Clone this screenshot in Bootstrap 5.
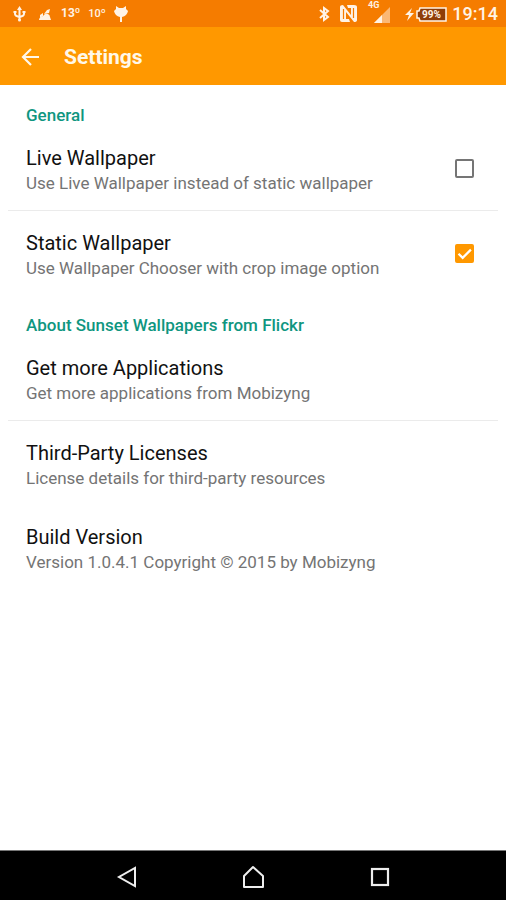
<!DOCTYPE html>
<html lang="en">
<head>
<meta charset="utf-8">
<meta name="viewport" content="width=device-width, initial-scale=1">
<title>Settings</title>
<link href="https://cdn.jsdelivr.net/npm/bootstrap@5.3.0/dist/css/bootstrap.min.css" rel="stylesheet">
<style>
body { font-family: Roboto, sans-serif; background: #fff; color: #111; }
svg { display: block; flex: none; }
.status { background: #f57c00; color: #fff3e6; height: 27px; padding: 0 8px 0 11px; line-height: 29px; }
.temp { font-size: 12px; font-weight: 700; }
.temp-low { font-size: 11px; font-weight: 500; }
.clock { font-size: 18px; font-weight: 500; }
.batt { font-size: 10px; font-weight: 700; fill: #fff3e6; }
.net { font-size: 9px; font-weight: 700; fill: #fff3e6; }
.appbar { background: #ff9800; height: 58px; padding: 0 18px; color: #fff8ea; }
.appbar h1 { font-size: 21px; font-weight: 700; line-height: 28px; margin: 2px 0 0 20px; }
.back { color: #fff8ea; }
.group { font-size: 17px; line-height: 22px; font-weight: 500; color: #0f9680; padding: 19px 18px 0; height: 41px; margin: 0; }
.pref { height: 84px; padding: 4px 18px 0; color: #111; text-align: left; }
.ruled { height: 85px; border-bottom: 1px solid #ebebeb; }
.pref-title { font-size: 20px; line-height: 26px; }
.pref-note { font-size: 17px; line-height: 24px; color: #747474; }
.tick.form-check-input { width: 19px; height: 19px; margin: 0 6px 4px 0; border: 2px solid #757575; border-radius: 2px; flex: none; }
.tick.form-check-input:checked { background-color: #ff9800; border-color: #ff9800; background-size: 18px 18px; background-image: url("data:image/svg+xml,%3Csvg xmlns='http://www.w3.org/2000/svg' viewBox='0 0 18 18'%3E%3Cpath d='M3 9l4 4l8-8' fill='none' stroke='%23fff' stroke-width='2.200'/%3E%3C/svg%3E"); }
.softkeys { background: #000; height: 50px; border-top: 1px solid #777; padding-top: 3px; }
</style>
<script src="https://cdn.jsdelivr.net/npm/bootstrap@5.3.0/dist/js/bootstrap.bundle.min.js"></script>
</head>
<body class="d-flex flex-column min-vh-100">
<div class="status d-flex align-items-center justify-content-between">
  <div class="d-flex align-items-center">
    <svg class="me-2" width="17" height="18" viewBox="0 0 17 18" fill="none" stroke="#fff3e6" stroke-width="2"><path d="M8.500 3v12M4 7v2q0 2 4.500 3q4.500-1 4.500-3V7"/><path d="M8.500 1l2.500 4h-5z" fill="#fff3e6" stroke="none"/><circle cx="8.500" cy="15" r="1.500" fill="#fff3e6" stroke="none"/><path d="M2.500 7h3M11.500 7h3"/></svg>
    <svg class="me-2" width="17" height="16" viewBox="0 0 17 16" fill="#fff3e6"><path d="M3 14q0-3 4-4q2-3 5-2q2 1 2 3l1 3z"/><path d="M8 8l3-4l3-1l-1 4zM4 9l3-2v3l-3 2z"/></svg>
    <span class="temp">13º</span>
    <span class="temp-low ms-2">10º</span>
    <svg class="ms-1" width="22" height="18" viewBox="-2 0 22 18" fill="#fff3e6"><path d="M4 1l3 2h4l3-2v3l2 2q-1 5-6 6v5H8v-5q-5-1-6-6l2-2z"/></svg>
  </div>
  <div class="d-flex align-items-center">
    <svg width="13" height="16" viewBox="0 0 13 16" fill="none" stroke="#fff3e6" stroke-width="2"><path d="M2 4l8 7l-4 3V2l4 3l-8 7"/></svg>
    <svg class="ms-2" width="19" height="20" viewBox="0 0 19 20" fill="#fff3e6"><path d="M1 3q0-2 3-2l8 10V4H9L8 1h7q3 0 3 2v13q0 2-3 2L7 8v7h3l1 3H3q-2 0-2-2z"/><path d="M4.500 15V5M14.500 14V4" stroke="#f57c00" stroke-width="1.200"/></svg>
    <svg class="ms-2" width="33" height="27" viewBox="-3 0 33 27"><text class="net" x="-1" y="8">4G</text><path d="M21 7v16H5z" fill="#fbb875"/><path d="M13 15v8H5z" fill="#fff3e6"/></svg>
    <svg class="ms-1" width="45" height="20" viewBox="0 0 45 20"><path d="M9 4L2 11h4l-2 6l7-8H7z" fill="#fff3e6"/><path d="M17 4h26v13H17l-1-3h-2V7h2z" fill="#8f3d08" stroke="#fff3e6" stroke-width="1.500"/><text class="batt" x="19" y="14">99%</text></svg>
    <span class="clock ms-1">19:14</span>
  </div>
</div>
<header class="appbar d-flex align-items-center">
  <button class="btn p-0 border-0 back" type="button" aria-label="Back"><svg width="26" height="24" viewBox="0 0 26 24" fill="none" stroke="currentColor" stroke-width="2.200"><path d="M21 13H6M13 5l-8 8l8 8"/></svg></button>
  <h1>Settings</h1>
</header>
<main class="flex-grow-1 px-2">
  <h2 class="group">General</h2>
  <label class="pref ruled d-flex align-items-center justify-content-between" for="live">
    <span><span class="pref-title d-block">Live Wallpaper</span><span class="pref-note d-block">Use Live Wallpaper instead of static wallpaper</span></span>
    <input class="form-check-input tick" type="checkbox" id="live">
  </label>
  <label class="pref d-flex align-items-center justify-content-between" for="static">
    <span><span class="pref-title d-block">Static Wallpaper</span><span class="pref-note d-block">Use Wallpaper Chooser with crop image option</span></span>
    <input class="form-check-input tick" type="checkbox" id="static" checked>
  </label>
  <h2 class="group">About Sunset Wallpapers from Flickr</h2>
  <a class="pref ruled d-flex align-items-center text-decoration-none" href="#apps">
    <span><span class="pref-title d-block">Get more Applications</span><span class="pref-note d-block">Get more applications from Mobizyng</span></span>
  </a>
  <a class="pref d-flex align-items-center text-decoration-none" href="#licenses">
    <span><span class="pref-title d-block">Third-Party Licenses</span><span class="pref-note d-block">License details for third-party resources</span></span>
  </a>
  <div class="pref d-flex align-items-center">
    <span><span class="pref-title d-block">Build Version</span><span class="pref-note d-block">Version 1.0.4.1 Copyright © 2015 by Mobizyng</span></span>
  </div>
</main>
<nav class="softkeys d-flex align-items-center justify-content-center" aria-label="System">
  <button class="btn p-0 border-0 w-25 d-flex justify-content-center" type="button" aria-label="Back"><svg width="24" height="24" viewBox="0 0 24 24" fill="none" stroke="#eee" stroke-width="2"><path d="M20 3v18L4 12z"/></svg></button>
  <button class="btn p-0 border-0 w-25 d-flex justify-content-center" type="button" aria-label="Home"><svg width="24" height="24" viewBox="0 0 24 24" fill="none" stroke="#eee" stroke-width="2"><path d="M3 22V11l9-9l10 9v11z" stroke-linejoin="round"/></svg></button>
  <button class="btn p-0 border-0 w-25 d-flex justify-content-center" type="button" aria-label="Recent apps"><svg width="24" height="24" viewBox="0 0 24 24" fill="none" stroke="#eee" stroke-width="2.200"><rect x="4" y="4" width="16" height="16"/></svg></button>
</nav>
</body>
</html>
